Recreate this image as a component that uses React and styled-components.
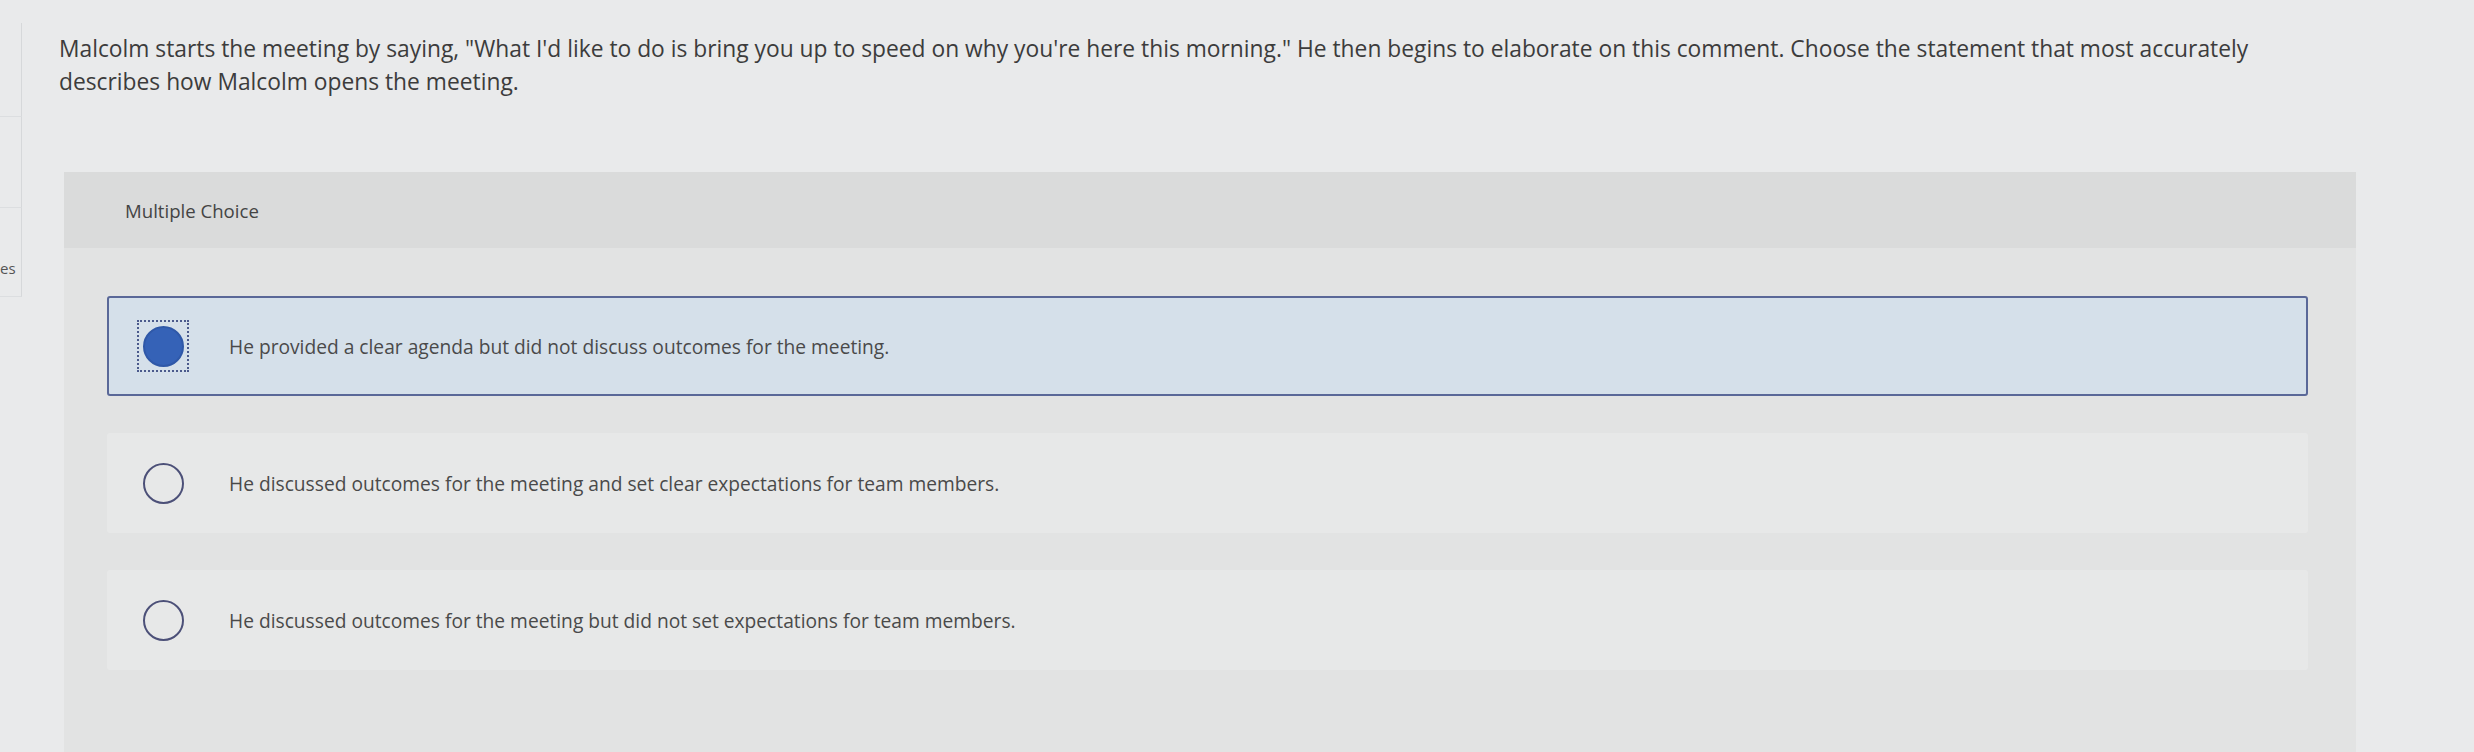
import React, { useState } from "react";
import styled, { createGlobalStyle } from "styled-components";

const GlobalStyle = createGlobalStyle`
  html, body {
    margin: 0;
    padding: 0;
    height: 752px;
    overflow: hidden;
    background: #e9eaeb;
  }
  * { box-sizing: border-box; }
`;

const choices = [
  "He provided a clear agenda but did not discuss outcomes for the meeting.",
  "He discussed outcomes for the meeting and set clear expectations for team members.",
  "He discussed outcomes for the meeting but did not set expectations for team members.",
];

export default function App() {
  const [selected, setSelected] = useState(0);

  return (
    <>
      <GlobalStyle />
      <Page>
        <Sidebar>
          <SideTab h={94} />
          <SideTab h={91} />
          <SideTab h={89}>
            <SideLabel>es</SideLabel>
          </SideTab>
        </Sidebar>
        <Main>
          <Question>
            Malcolm starts the meeting by saying, "What I'd like to do is bring you up to speed on why you're here this morning." He then begins to elaborate on this comment. Choose the statement that most accurately describes how Malcolm opens the meeting.
          </Question>
          <Panel>
            <PanelHeader>Multiple Choice</PanelHeader>
            <OptionList>
              {choices.map((text, i) => (
                <Option key={i} active={i === selected} onClick={() => setSelected(i)}>
                  <RadioWrap focused={i === selected}>
                    <Radio checked={i === selected} />
                  </RadioWrap>
                  <OptionText>{text}</OptionText>
                </Option>
              ))}
            </OptionList>
          </Panel>
        </Main>
      </Page>
    </>
  );
}

const Page = styled.div`
  display: flex;
  height: 752px;
  font-family: "Open Sans", "Liberation Sans", Arial, sans-serif;
`;

const Sidebar = styled.div`
  width: 22px;
  padding-top: 23px;
  display: flex;
  flex-direction: column;
`;

const SideTab = styled.div`
  height: ${(p) => p.h}px;
  border-right: 1px solid #d6d8da;
  border-bottom: 1px solid #dcdee0;
  display: flex;
  align-items: flex-end;
  padding-bottom: 18px;
  overflow: hidden;
`;

const SideLabel = styled.span`
  font-size: 15px;
  line-height: 20px;
  color: #555;
`;

const Main = styled.div`
  flex: 1;
  padding-left: 37px;
  padding-top: 32px;
  display: flex;
  flex-direction: column;
`;

const Question = styled.div`
  width: 2240px;
  font-size: 22.8px;
  line-height: 33px;
  color: #3c3c3c;
`;

const Panel = styled.div`
  margin-top: 74px;
  margin-left: 5px;
  width: 2292px;
  flex: 1;
  background: #e2e3e3;
`;

const PanelHeader = styled.div`
  height: 76px;
  display: flex;
  align-items: center;
  padding-left: 61px;
  background: #dadbdb;
  font-size: 18.6px;
  color: #444;
`;

const OptionList = styled.div`
  display: flex;
  flex-direction: column;
  gap: 37px;
  padding: 48px 48px 0 43px;
`;

const Option = styled.div`
  height: 100px;
  display: flex;
  align-items: center;
  gap: 40px;
  padding-left: 28px;
  border: 2px solid ${(p) => (p.active ? "#5a6898" : "transparent")};
  border-radius: 3px;
  background: ${(p) => (p.active ? "#d5e0ea" : "#e7e8e8")};
  cursor: pointer;
`;

const RadioWrap = styled.div`
  width: 52px;
  height: 52px;
  flex-shrink: 0;
  display: flex;
  align-items: center;
  justify-content: center;
  border: 2px dotted ${(p) => (p.focused ? "#4b5a8c" : "transparent")};
`;

const Radio = styled.div`
  width: 41px;
  height: 41px;
  border-radius: 50%;
  border: 2px solid ${(p) => (p.checked ? "#2f58a8" : "#4c5078")};
  background: ${(p) => (p.checked ? "#3562b7" : "transparent")};
`;

const OptionText = styled.div`
  font-size: 19.2px;
  color: #4a4a4a;
`;
